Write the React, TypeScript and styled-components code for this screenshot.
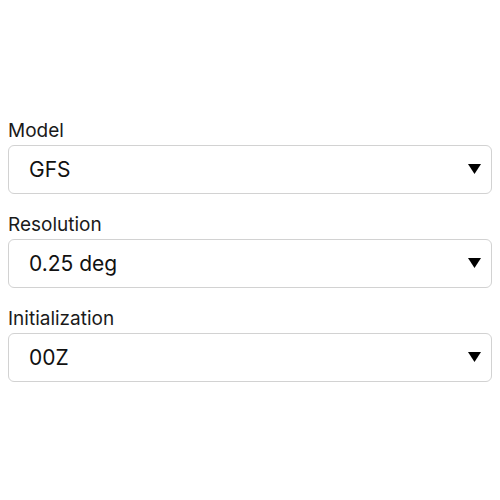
import React from "react";
import styled, { createGlobalStyle } from "styled-components";

const Global = createGlobalStyle`
  html, body { margin: 0; padding: 0; background: #ffffff; }
  body { font-family: Inter, "Liberation Sans", Arial, sans-serif; color: #1c1c1c; }
`;

const Page = styled.div`
  min-height: 500px;
  box-sizing: border-box;
  padding: 0 8px;
  display: flex;
  flex-direction: column;
  justify-content: center;
  gap: 19px;
`;

const Field = styled.div`
  display: flex;
  flex-direction: column;
  gap: 3px;
`;

const Label = styled.label`
  font-size: 19px;
  line-height: 23px;
  color: #1a1a1a;
`;

const SelectWrap = styled.div`
  position: relative;
  height: 49px;
`;

const Select = styled.select`
  appearance: none;
  -webkit-appearance: none;
  width: 100%;
  height: 100%;
  box-sizing: border-box;
  margin: 0;
  border: 1px solid #d2d2d2;
  border-radius: 6px;
  background: #ffffff;
  padding: 0 40px 0 20px;
  font-family: Inter, "Liberation Sans", Arial, sans-serif;
  font-size: 21px;
  color: #111111;
  outline: none;
`;

const Arrow = styled.svg`
  position: absolute;
  right: 11px;
  top: 50%;
  width: 13px;
  height: 10px;
  transform: translateY(-50%);
  pointer-events: none;
`;

type Opt = { label: string; options: string[] };

const fields: Opt[] = [
  { label: "Model", options: ["GFS", "NAM", "ECMWF"] },
  { label: "Resolution", options: ["0.25 deg", "0.5 deg", "1.0 deg"] },
  { label: "Initialization", options: ["00Z", "06Z", "12Z", "18Z"] },
];

export default function App() {
  return (
    <>
      <Global />
      <Page>
        {fields.map((f) => (
          <Field key={f.label}>
            <Label>{f.label}</Label>
            <SelectWrap>
              <Select defaultValue={f.options[0]}>
                {f.options.map((o) => (
                  <option key={o} value={o}>
                    {o}
                  </option>
                ))}
              </Select>
              <Arrow viewBox="0 0 13 10">
                <path d="M0 0 H13 L6.5 10 Z" fill="#000" />
              </Arrow>
            </SelectWrap>
          </Field>
        ))}
      </Page>
    </>
  );
}
